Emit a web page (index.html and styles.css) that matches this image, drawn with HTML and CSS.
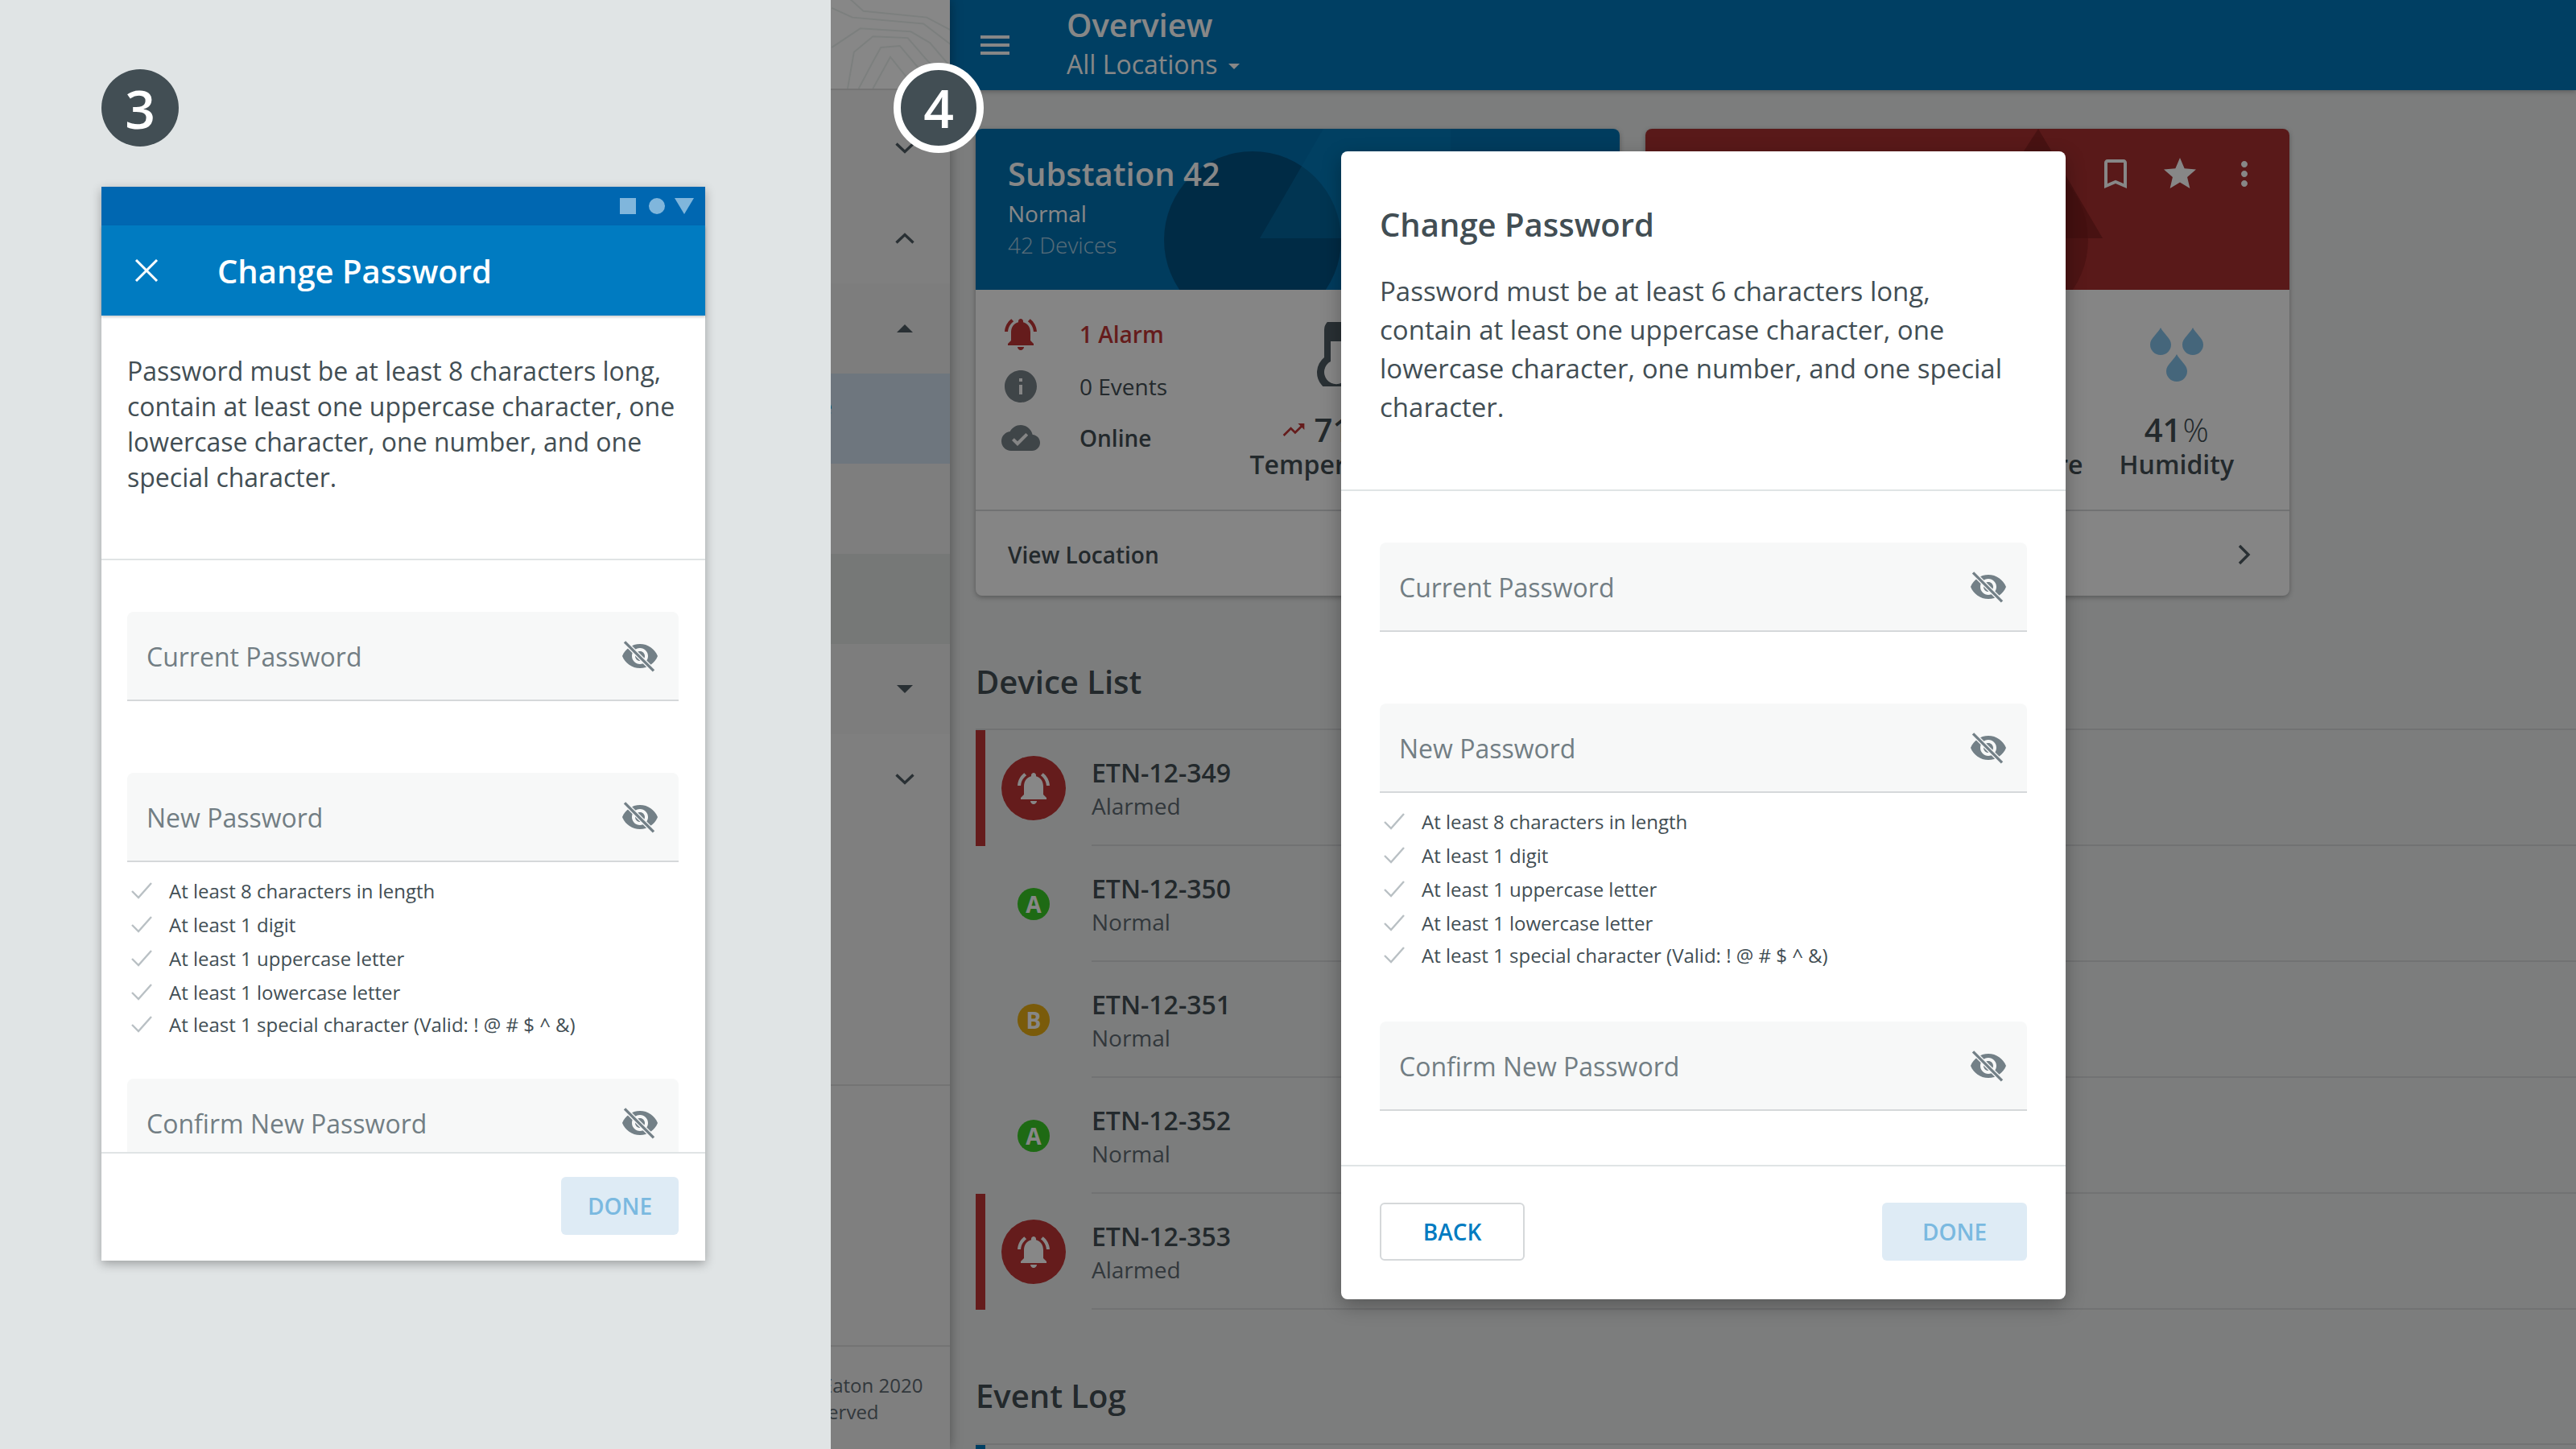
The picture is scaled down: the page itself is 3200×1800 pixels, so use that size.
FILE: index.html
```html
<!DOCTYPE html>
<html lang="en">
<head>
    <meta charset="UTF-8">
    <title>Change Password</title>
    <link rel="stylesheet" href="styles.css">
</head>
<body>
    <svg class="sprite" width="0" height="0">
        <symbol id="eye-off" viewBox="0 0 24 24">
            <path fill="#738087" fill-rule="evenodd" d="M12 4.5C7 4.5 2.73 7.61 1 12c1.73 4.39 6 7.5 11 7.5s9.27-3.11 11-7.5c-1.73-4.39-6-7.5-11-7.5zM12 17c-2.76 0-5-2.24-5-5s2.24-5 5-5 5 2.24 5 5-2.24 5-5 5zm0-8c-1.66 0-3 1.34-3 3s1.34 3 3 3 3-1.34 3-3-1.34-3-3-3z"/>
            <path stroke="#f7f8f8" stroke-width="3" d="M2.5 3.2l18 18"/>
            <path stroke="#738087" stroke-width="1.7" d="M2.5 3.2l18 18"/>
        </symbol>
        <symbol id="check" viewBox="0 0 28 24">
            <path fill="none" stroke="#b9c0c4" stroke-width="2.4" d="M2 13l8 8L26 3"/>
        </symbol>
        <symbol id="bell" viewBox="0 0 24 24">
            <path d="M7.58 4.08L6.15 2.65C3.75 4.48 2.17 7.3 2.03 10.5h2c.15-2.65 1.51-4.97 3.55-6.42zm12.39 6.42h2c-.15-3.2-1.73-6.02-4.12-7.85l-1.42 1.43c2.02 1.45 3.39 3.77 3.54 6.42zM18 11c0-3.07-1.64-5.64-4.5-6.32V4c0-.83-.67-1.5-1.5-1.5s-1.5.67-1.5 1.5v.68C7.63 5.36 6 7.92 6 11v5l-2 2v1h16v-1l-2-2v-5zm-6 11c.14 0 .27-.01.4-.04.65-.14 1.18-.58 1.44-1.18.1-.24.15-.5.15-.78h-4c.01 1.1.9 2 2.01 2z"/>
        </symbol>
        <symbol id="chev-down" viewBox="0 0 24 14">
            <path fill="none" stroke="#4f5b62" stroke-width="3.4" d="M1.5 1.5L12 11.5 22.5 1.5"/>
        </symbol>
        <symbol id="chev-up" viewBox="0 0 24 14">
            <path fill="none" stroke="#4f5b62" stroke-width="3.4" d="M1.5 12.5L12 2.5 22.5 12.5"/>
        </symbol>
        <symbol id="drops" viewBox="0 5 66 80">
            <path fill="#82c0e8" d="M13 12C10 19 0 25 0 33a13 13 0 0 0 26 0c0-8-10-14-13-21zM53 12c-3 7-13 13-13 21a13 13 0 0 0 26 0c0-8-10-14-13-21zM33 45c-3 7-13 13-13 21a13 13 0 0 0 26 0c0-8-10-14-13-21z"/>
        </symbol>
    </svg>

    <!-- step 3: mobile -->
    <section class="mobile-panel">
        <div class="step">3</div>
        <div class="phone">
            <div class="status-bar">
                <span class="st-square"></span>
                <span class="st-circle"></span>
                <span class="st-triangle"></span>
            </div>
            <div class="app-bar">
                <svg class="close-icon" viewBox="0 0 30 28"><path fill="none" stroke="#fff" stroke-width="3" d="M2 1l26 26M28 1L2 27"/></svg>
                <span class="app-bar-title">Change Password</span>
            </div>
            <div class="phone-scroll">
                <p class="phone-text">Password must be at least 8 characters long, contain at least one uppercase character, one lowercase character, one number, and one special character.</p>
                <div class="form phone-form">
                    <div class="field"><span>Current Password</span><svg class="eye"><use href="#eye-off"/></svg></div>
                    <div class="field field-next"><span>New Password</span><svg class="eye"><use href="#eye-off"/></svg></div>
                    <ul class="rules">
                        <li><svg class="tick"><use href="#check"/></svg>At least 8 characters in length</li>
                        <li><svg class="tick"><use href="#check"/></svg>At least 1 digit</li>
                        <li><svg class="tick"><use href="#check"/></svg>At least 1 uppercase letter</li>
                        <li><svg class="tick"><use href="#check"/></svg>At least 1 lowercase letter</li>
                        <li class="rule-last"><svg class="tick"><use href="#check"/></svg>At least 1 special character (Valid: ! @ # $ ^ &amp;)</li>
                    </ul>
                    <div class="field field-confirm-phone"><span>Confirm New Password</span><svg class="eye"><use href="#eye-off"/></svg></div>
                </div>
            </div>
            <div class="phone-foot">
                <button class="btn btn-done btn-phone">DONE</button>
            </div>
        </div>
    </section>

    <!-- step 4: desktop -->
    <section class="desktop">
        <aside class="sidebar">
            <div class="side-top">
                <svg class="topo" viewBox="0 0 148 112" fill="none" stroke="#eaf0ee" stroke-width="2">
                    <path d="M20 -4l20 18 80 8 30 16"/>
                    <path d="M0 10l26 12 90 8 34 26"/>
                    <path d="M0 60l36-24 64 4 24 14 24 28"/>
                    <path d="M20 112l8-46 24-20 44 2 26 30 18 16"/>
                    <path d="M34 112l18-34 10-18 24-2 22 26 16 28"/>
                    <path d="M52 112l22-40 32 40"/>
                </svg>
            </div>
            <div class="side-row side-first"><svg class="chev"><use href="#chev-down"/></svg></div>
            <div class="side-row"><svg class="chev"><use href="#chev-up"/></svg></div>
            <div class="side-row side-open"><span class="caret caret-up"></span></div>
            <div class="side-row side-active"><span class="side-label">Overview Page</span></div>
            <div class="side-row side-plain"></div>
            <div class="side-row side-hover"></div>
            <div class="side-row side-open"><span class="caret caret-down"></span></div>
            <div class="side-row"><svg class="chev"><use href="#chev-down"/></svg></div>
            <div class="side-gap"></div>
            <div class="side-gap side-gap-2"></div>
            <div class="side-copy">
                <div>Copyright &copy; Eaton 2020</div>
                <div>All Rights Reserved</div>
            </div>
        </aside>

        <main class="main">
            <header class="top-bar">
                <div class="burger"><span></span><span></span><span></span></div>
                <div class="top-titles">
                    <div class="top-title">Overview</div>
                    <div class="top-sub">All Locations<span class="caret caret-down caret-light"></span></div>
                </div>
            </header>

            <div class="cards">
                <article class="card">
                    <div class="card-head head-blue">
                        <svg class="head-art" viewBox="0 0 800 200">
                            <circle cx="344" cy="138" r="110" fill="#00385c" fill-opacity=".55"/>
                            <path d="M353 136L432 0l158 0 0 136z" fill="#0a86c8" fill-opacity=".35"/>
                        </svg>
                        <div class="head-name">Substation 42</div>
                        <div class="head-status">Normal</div>
                        <div class="head-count">42 Devices</div>
                    </div>
                    <div class="card-body">
                        <div class="summary">
                            <div class="sum-row sum-alarm">
                                <svg class="sum-icon" viewBox="0 0 24 24"><use href="#bell"/></svg><span>1 Alarm</span>
                            </div>
                            <div class="sum-row">
                                <svg class="sum-icon" viewBox="0 0 24 24"><path d="M12 2C6.48 2 2 6.48 2 12s4.48 10 10 10 10-4.48 10-10S17.52 2 12 2zm1 15h-2v-6h2v6zm0-8h-2V7h2v2z"/></svg><span>0 Events</span>
                            </div>
                            <div class="sum-row sum-strong">
                                <svg class="sum-icon" viewBox="0 0 24 24"><path d="M19.35 10.04C18.67 6.59 15.64 4 12 4 9.11 4 6.6 5.64 5.35 8.04 2.34 8.36 0 10.91 0 14c0 3.31 2.69 6 6 6h13c2.76 0 5-2.24 5-5 0-2.64-2.05-4.78-4.65-4.96zM10 17l-3.5-3.5 1.41-1.41L10 14.17 15.18 9l1.41 1.41L10 17z"/></svg><span>Online</span>
                            </div>
                        </div>
                        <div class="stats">
                            <div class="stat">
                                <svg class="stat-icon thermo" viewBox="0 0 48 80">
                                    <path fill="#4f5b62" d="M9 10a15 15 0 0 1 30 0v34a24 24 0 1 1-30 0z"/>
                                    <path fill="#fff" d="M17 24h14v25a15 15 0 1 1-14 0z"/>
                                </svg>
                                <div class="stat-value">
                                    <svg class="trend" viewBox="0 0 24 24"><path d="M16 6l2.29 2.29-4.88 4.88-4-4L2 16.59 3.41 18l6-6 4 4 6.3-6.29L22 12V6z"/></svg>71<span class="unit">&deg;F</span>
                                </div>
                                <div class="stat-label">Temperature</div>
                            </div>
                            <div class="stat">
                                <svg class="stat-icon"><use href="#drops"/></svg>
                                <div class="stat-value">41<span class="unit">%</span></div>
                                <div class="stat-label">Humidity</div>
                            </div>
                        </div>
                    </div>
                    <div class="card-foot">View Location</div>
                </article>

                <article class="card">
                    <div class="card-head head-red">
                        <svg class="head-art" viewBox="0 0 800 200">
                            <circle cx="440" cy="138" r="110" fill="#7a1c1c" fill-opacity=".5"/>
                            <path d="M400 136L488 0l80 136z" fill="#7a1c1c" fill-opacity=".7"/>
                        </svg>
                        <div class="head-actions">
                            <svg class="head-icon" viewBox="0 0 24 24"><path d="M17 3H7c-1.1 0-1.99.9-1.99 2L5 21l7-3 7 3V5c0-1.1-.9-2-2-2zm0 15l-5-2.18L7 18V5h10v13z"/></svg>
                            <svg class="head-icon" viewBox="0 0 24 24"><path d="M12 17.27L18.18 21l-1.64-7.03L22 9.24l-7.19-.61L12 2 9.19 8.63 2 9.24l5.46 4.73L5.82 21z"/></svg>
                            <svg class="head-icon" viewBox="0 0 24 24"><path d="M12 8c1.1 0 2-.9 2-2s-.9-2-2-2-2 .9-2 2 .9 2 2 2zm0 2c-1.1 0-2 .9-2 2s.9 2 2 2 2-.9 2-2-.9-2-2-2zm0 6c-1.1 0-2 .9-2 2s.9 2 2 2 2-.9 2-2-.9-2-2-2z"/></svg>
                        </div>
                    </div>
                    <div class="card-body">
                        <div class="summary"></div>
                        <div class="stats">
                            <div class="stat">
                                <div class="stat-icon"></div>
                                <div class="stat-value">72<span class="unit">&deg;F</span></div>
                                <div class="stat-label">Temperature</div>
                            </div>
                            <div class="stat">
                                <svg class="stat-icon"><use href="#drops"/></svg>
                                <div class="stat-value">41<span class="unit">%</span></div>
                                <div class="stat-label">Humidity</div>
                            </div>
                        </div>
                    </div>
                    <div class="card-foot card-foot-end">
                        <svg class="foot-chev" viewBox="0 0 16 26"><path fill="none" stroke="#4f5b62" stroke-width="3.4" d="M2 2l11 11L2 24"/></svg>
                    </div>
                </article>
            </div>

            <h2 class="section-title">Device List</h2>
            <div class="devices">
                <div class="device device-alarm">
                    <div class="device-icon"><span class="alarm-dot"><svg class="alarm-bell" viewBox="0 0 24 24"><use href="#bell"/></svg></span></div>
                    <div class="device-info"><div class="device-name">ETN-12-349</div><div class="device-state">Alarmed</div></div>
                </div>
                <div class="device">
                    <div class="device-icon"><span class="grade grade-a">A</span></div>
                    <div class="device-info"><div class="device-name">ETN-12-350</div><div class="device-state">Normal</div></div>
                </div>
                <div class="device">
                    <div class="device-icon"><span class="grade grade-b">B</span></div>
                    <div class="device-info"><div class="device-name">ETN-12-351</div><div class="device-state">Normal</div></div>
                </div>
                <div class="device">
                    <div class="device-icon"><span class="grade grade-a">A</span></div>
                    <div class="device-info"><div class="device-name">ETN-12-352</div><div class="device-state">Normal</div></div>
                </div>
                <div class="device device-alarm">
                    <div class="device-icon"><span class="alarm-dot"><svg class="alarm-bell" viewBox="0 0 24 24"><use href="#bell"/></svg></span></div>
                    <div class="device-info"><div class="device-name">ETN-12-353</div><div class="device-state">Alarmed</div></div>
                </div>
            </div>

            <h2 class="section-title section-events">Event Log</h2>
            <div class="events"><div class="event-bar"></div></div>
        </main>

        <div class="overlay">
            <div class="modal">
                <div class="modal-head">
                    <h3 class="modal-title">Change Password</h3>
                    <p class="modal-text">Password must be at least 6 characters long, contain at least one uppercase character, one lowercase character, one number, and one special character.</p>
                </div>
                <div class="form modal-form">
                    <div class="field"><span>Current Password</span><svg class="eye"><use href="#eye-off"/></svg></div>
                    <div class="field field-next"><span>New Password</span><svg class="eye"><use href="#eye-off"/></svg></div>
                    <ul class="rules">
                        <li><svg class="tick"><use href="#check"/></svg>At least 8 characters in length</li>
                        <li><svg class="tick"><use href="#check"/></svg>At least 1 digit</li>
                        <li><svg class="tick"><use href="#check"/></svg>At least 1 uppercase letter</li>
                        <li><svg class="tick"><use href="#check"/></svg>At least 1 lowercase letter</li>
                        <li class="rule-last"><svg class="tick"><use href="#check"/></svg>At least 1 special character (Valid: ! @ # $ ^ &amp;)</li>
                    </ul>
                    <div class="field field-confirm"><span>Confirm New Password</span><svg class="eye"><use href="#eye-off"/></svg></div>
                </div>
                <div class="modal-foot">
                    <button class="btn btn-back">BACK</button>
                    <button class="btn btn-done">DONE</button>
                </div>
            </div>
        </div>

        <div class="step step-over">4</div>
    </section>
</body>
</html>
```

FILE: styles.css
```css
/* Reset and page frame */
* {
    box-sizing: border-box;
}

body {
    margin: 0;
    width: 3200px;
    height: 1800px;
    display: flex;
    overflow: hidden;
    font-family: "Open Sans", "Noto Sans", sans-serif;
    color: #424e54;
}

h2, h3, p, ul {
    margin: 0;
    padding: 0;
}

svg {
    display: block;
}

.sprite {
    position: absolute;
}

/* Numbered step badges */
.step {
    width: 96px;
    height: 96px;
    border-radius: 50%;
    background-color: #424e54;
    color: #fff;
    font-size: 66px;
    font-weight: 600;
    line-height: 96px;
    text-align: center;
}

.step-over {
    position: absolute;
    left: 78px;
    top: 78px;
    width: 112px;
    height: 112px;
    border: 9px solid #fff;
    line-height: 92px;
    z-index: 3;
}

/* Step 3: phone */
.mobile-panel {
    width: 1032px;
    flex-shrink: 0;
    padding: 86px 0 0 126px;
    background-color: #e0e4e5;
}

.phone {
    width: 750px;
    height: 1334px;
    margin-top: 50px;
    display: flex;
    flex-direction: column;
    background-color: #fff;
    box-shadow: 0 4px 12px rgba(0, 0, 0, 0.3);
}

.status-bar {
    height: 48px;
    display: flex;
    align-items: center;
    justify-content: flex-end;
    gap: 16px;
    padding: 0 14px 0 0;
    background-color: #0067b1;
}

.st-square {
    width: 20px;
    height: 20px;
    background-color: #80b6dc;
}

.st-circle {
    width: 20px;
    height: 20px;
    border-radius: 50%;
    background-color: #80b6dc;
}

.st-triangle {
    width: 0;
    height: 0;
    margin-left: -4px;
    border-left: 12px solid transparent;
    border-right: 12px solid transparent;
    border-top: 20px solid #80b6dc;
}

.app-bar {
    height: 112px;
    display: flex;
    align-items: center;
    padding-left: 41px;
    background-color: #007bc1;
    box-shadow: 0 2px 3px rgba(0, 0, 0, 0.2);
    position: relative;
}

.close-icon {
    width: 30px;
    height: 28px;
}

.app-bar-title {
    margin-left: 73px;
    font-size: 40px;
    font-weight: 600;
    color: #fff;
}

.phone-scroll {
    flex: 1;
    min-height: 0;
    overflow: hidden;
}

.phone-text {
    padding: 47px 32px 79px;
    border-bottom: 2px solid #e0e4e5;
    font-size: 32px;
    line-height: 44px;
}

.phone-form {
    padding: 64px 33px 0 32px;
}

.phone-foot {
    height: 135px;
    display: flex;
    justify-content: flex-end;
    padding: 29px 33px 0 0;
    border-top: 2px solid #e0e4e5;
}

/* Password form, shared by phone and modal */
.field {
    height: 111px;
    display: flex;
    align-items: center;
    justify-content: space-between;
    padding: 0 24px;
    background-color: #f7f8f8;
    border-bottom: 2px solid #d5d8da;
    border-radius: 8px 8px 0 0;
    font-size: 32px;
    color: #727e84;
}

.field span {
    padding-top: 2px;
}

.field-next {
    margin-top: 89px;
}

.field-confirm {
    margin-top: 62px;
}

.field-confirm-phone {
    margin-top: 47px;
}

.eye {
    width: 48px;
    height: 48px;
}

.rules {
    list-style: none;
    margin-top: 14px;
}

.rules li {
    height: 42px;
    display: flex;
    align-items: center;
    padding-left: 4px;
    font-size: 24px;
}

.rules .rule-last {
    margin-top: -2px;
}

.tick {
    width: 28px;
    height: 24px;
    margin-right: 20px;
}

.btn {
    height: 72px;
    border-radius: 6px;
    border: none;
    font-family: inherit;
    font-size: 28px;
    font-weight: 600;
}

.btn-done {
    width: 180px;
    background-color: #deebf5;
    color: #7ab9e0;
}

.btn-phone {
    width: 146px;
}

.btn-back {
    width: 180px;
    background-color: #fff;
    border: 2px solid #d5d8da;
    color: #007bc1;
}

/* Step 4: desktop page */
.desktop {
    flex: 1;
    position: relative;
    display: flex;
    overflow: hidden;
}

.sidebar {
    width: 148px;
    flex-shrink: 0;
    display: flex;
    flex-direction: column;
    overflow: hidden;
    background-color: #f0f0f0;
    box-shadow: 0 0 14px rgba(0, 0, 0, 0.35);
    position: relative;
    z-index: 1;
}

.side-top {
    height: 112px;
    flex-shrink: 0;
    background-color: #fff;
    border-bottom: 2px solid #dcdcdc;
}

.topo {
    width: 148px;
    height: 110px;
}

.side-row {
    height: 112px;
    flex-shrink: 0;
    display: flex;
    align-items: center;
    justify-content: flex-end;
    padding-right: 44px;
}

.side-first {
    height: 128px;
    padding-top: 16px;
}

.side-open {
    background-color: #ececec;
}

.side-active {
    padding-right: 0;
    background-color: #d0dfee;
}

.side-label {
    flex-shrink: 0;
    width: 200px;
    margin: -32px auto 0 -198px;
    text-align: right;
    font-size: 28px;
    white-space: nowrap;
    color: #007bc1;
}

.side-plain {
    background-color: #eeeeee;
}

.side-hover {
    background-color: #dfe3e1;
}

.chev {
    width: 24px;
    height: 14px;
}

.caret {
    display: block;
    width: 0;
    height: 0;
    border-left: 10px solid transparent;
    border-right: 10px solid transparent;
}

.side-row .caret {
    margin-right: 2px;
}

.caret-up {
    border-bottom: 10px solid #4f5b62;
}

.caret-down {
    border-top: 10px solid #4f5b62;
}

.caret-light {
    display: inline-block;
    margin: 0 0 2px 14px;
    vertical-align: middle;
    border-left-width: 7px;
    border-right-width: 7px;
    border-top: 7px solid #fff;
}

.side-gap {
    height: 325px;
    flex-shrink: 0;
    border-bottom: 2px solid #dcdcdc;
}

.side-gap-2 {
    height: 324px;
}

.side-copy {
    margin: 31px 0 0 -152px;
    font-size: 24px;
    line-height: 33px;
    white-space: nowrap;
    color: #5f6a72;
}

.main {
    flex: 1;
    min-width: 0;
    background-color: #eaecec;
    overflow: hidden;
}

.top-bar {
    height: 112px;
    display: flex;
    align-items: center;
    padding-left: 38px;
    background-color: #0077bb;
    box-shadow: 0 2px 6px rgba(0, 0, 0, 0.25);
    color: #fff;
}

.burger {
    width: 36px;
}

.burger span {
    display: block;
    height: 4px;
    margin: 6px 0;
    background-color: #fff;
}

.top-titles {
    margin-left: 71px;
}

.top-title {
    font-size: 40px;
    font-weight: 600;
    line-height: 48px;
    margin-top: -2px;
}

.top-sub {
    font-size: 32px;
    line-height: 46px;
    padding-top: 2px;
}

.cards {
    display: flex;
    gap: 32px;
    padding: 48px 0 0 32px;
}

.card {
    width: 800px;
    height: 580px;
    display: flex;
    flex-direction: column;
    background-color: #fbfbfb;
    border-radius: 8px;
    box-shadow: 0 2px 6px rgba(0, 0, 0, 0.3);
    overflow: hidden;
}

.card-head {
    height: 200px;
    flex-shrink: 0;
    position: relative;
    padding: 30px 0 0 40px;
    color: #fff;
}

.head-blue {
    background-color: #0072b2;
}

.head-red {
    background-color: #a83030;
}

.head-art {
    position: absolute;
    left: 0;
    top: 0;
    width: 800px;
    height: 200px;
}

.head-name, .head-status, .head-count {
    position: relative;
}

.head-name {
    font-size: 40px;
    font-weight: 600;
    line-height: 52px;
}

.head-status {
    margin-top: 3px;
    font-size: 28px;
    line-height: 40px;
}

.head-count {
    font-size: 28px;
    line-height: 38px;
    font-weight: 300;
    opacity: 0.65;
}

.head-actions {
    position: absolute;
    right: 32px;
    top: 32px;
    display: flex;
    gap: 32px;
}

.head-icon {
    width: 48px;
    height: 48px;
    fill: #fff;
}

.card-body {
    height: 275px;
    flex-shrink: 0;
    display: flex;
    justify-content: space-between;
    border-bottom: 2px solid #d5d8da;
}

.summary {
    padding: 23px 0 0 32px;
}

.sum-row {
    height: 64.5px;
    display: flex;
    align-items: center;
    font-size: 28px;
}

.sum-row span {
    margin-left: 49px;
}

.sum-icon {
    width: 48px;
    height: 48px;
    fill: #788288;
}

.sum-alarm {
    font-weight: 600;
    color: #bf3535;
}

.sum-alarm .sum-icon {
    fill: #bf3535;
}

.sum-strong {
    font-weight: 600;
}

.stats {
    display: flex;
    gap: 45px;
    padding: 40px 69px 0 0;
}

.stat {
    display: flex;
    flex-direction: column;
    align-items: center;
}

.stat-icon {
    height: 80px;
    width: 66px;
    flex-shrink: 0;
}

.thermo {
    margin-left: 12px;
}

.stat-value {
    margin-top: 30px;
    display: flex;
    align-items: center;
    font-size: 40px;
    font-weight: 600;
    line-height: 48px;
}

.trend {
    width: 32px;
    height: 32px;
    margin-right: 10px;
    fill: #bf3535;
}

.unit {
    font-weight: 300;
    margin-left: 2px;
}

.stat-label {
    font-size: 32px;
    font-weight: 600;
    line-height: 40px;
    margin-top: -1px;
}

.card-foot {
    flex: 1;
    display: flex;
    align-items: center;
    padding: 3px 0 0 40px;
    font-size: 28px;
    font-weight: 600;
}

.card-foot-end {
    justify-content: flex-end;
    padding-right: 48px;
}

.foot-chev {
    width: 16px;
    height: 26px;
}

/* Device list */
.section-title {
    margin: 80px 0 31px 32px;
    font-size: 40px;
    font-weight: 600;
    line-height: 54px;
}

.section-events {
    margin: 80px 0 32px 32px;
}

.devices {
    margin-left: 32px;
    border-top: 2px solid #d5d8da;
}

.device {
    height: 144px;
    display: flex;
    border-left: 12px solid transparent;
}

.device-alarm {
    border-left-color: #bf3535;
}

.device-icon {
    width: 120px;
    margin-right: 12px;
    flex-shrink: 0;
    display: flex;
    align-items: center;
    justify-content: center;
}

.alarm-dot {
    width: 80px;
    height: 80px;
    border-radius: 50%;
    display: flex;
    align-items: center;
    justify-content: center;
    background-color: #bf3535;
}

.alarm-bell {
    width: 48px;
    height: 48px;
    fill: #fff;
}

.grade {
    width: 40px;
    height: 40px;
    border-radius: 50%;
    text-align: center;
    font-size: 28px;
    font-weight: 700;
    line-height: 40px;
    color: #fff;
}

.grade-a {
    background-color: #3ac826;
}

.grade-b {
    background-color: #e6ad13;
}

.device-info {
    flex: 1;
    display: flex;
    flex-direction: column;
    justify-content: center;
    padding-top: 2px;
    border-bottom: 2px solid #d5d8da;
}

.device-name {
    font-size: 32px;
    font-weight: 600;
    line-height: 46px;
}

.device-state {
    margin-top: -3px;
    font-size: 28px;
    line-height: 42px;
    color: #5f6a72;
}

.events {
    margin-left: 32px;
    height: 40px;
    border-top: 2px solid #d5d8da;
}

.event-bar {
    width: 12px;
    height: 40px;
    background-color: #0077bb;
}

/* Modal over the dimmed page */
.overlay {
    position: absolute;
    left: 0;
    top: 0;
    right: 0;
    bottom: 0;
    z-index: 2;
    display: flex;
    align-items: center;
    justify-content: center;
    padding-top: 2px;
    background-color: rgba(0, 0, 0, 0.47);
}

.modal {
    width: 900px;
    height: 1426px;
    display: flex;
    flex-direction: column;
    background-color: #fff;
    border-radius: 8px;
    box-shadow: 0 8px 24px rgba(0, 0, 0, 0.3);
}

.modal-head {
    padding: 64px 48px 78px;
    border-bottom: 2px solid #e0e4e5;
}

.modal-title {
    font-size: 40px;
    font-weight: 600;
    line-height: 54px;
}

.modal-text {
    margin-top: 32px;
    font-size: 33px;
    line-height: 48px;
}

.modal-form {
    flex: 1;
    padding: 64px 48px 0;
}

.modal-foot {
    height: 167px;
    flex-shrink: 0;
    display: flex;
    justify-content: space-between;
    padding: 45px 48px 0;
    border-top: 2px solid #e0e4e5;
}
```
